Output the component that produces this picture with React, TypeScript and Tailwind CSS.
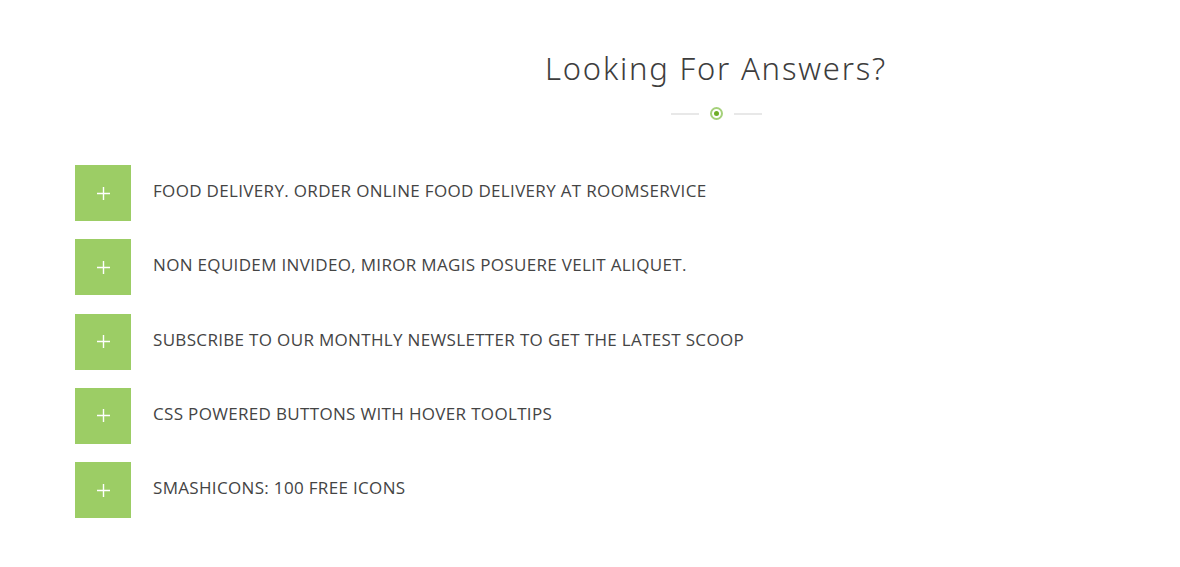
const faqs = [
  "Food delivery. Order online food delivery at RoomService",
  "Non equidem invideo, miror magis posuere velit aliquet.",
  "Subscribe to our monthly newsletter to get the latest scoop",
  "CSS Powered Buttons with Hover Tooltips",
  "Smashicons: 100 Free Icons",
]

export default function App() {
  return (
    <div className="w-[1180px] h-[567px] bg-white overflow-hidden">
      <div className="pl-[252px] pt-[48px] text-center">
        <h2
          className="text-[31px] leading-[40px] font-light text-[#3d3d3d] tracking-[1.8px]"
          style={{ fontFamily: "'Noto Sans', sans-serif" }}
        >
          Looking For Answers?
        </h2>
        <div className="flex items-center justify-center gap-[11px] mt-[19px]">
          <span className="w-[28px] h-[2px] bg-[#e8e8e8]" />
          <span className="w-[13px] h-[13px] rounded-full border-2 border-[#a5d17a] flex items-center justify-center">
            <span className="w-[5px] h-[5px] rounded-full bg-[#6fae2a]" />
          </span>
          <span className="w-[28px] h-[2px] bg-[#e8e8e8]" />
        </div>
      </div>

      <div className="flex flex-col gap-[18.25px] pl-[75px] mt-[45px]">
        {faqs.map((q) => (
          <div key={q} className="flex items-center gap-[22px]">
            <button className="w-[56px] h-[56px] bg-[#9ccd65] flex items-center justify-center">
              <svg width="13" height="13" viewBox="0 0 13 13">
                <path d="M6.5 0v13M0 6.5h13" stroke="#fff" strokeWidth="1.4" />
              </svg>
            </button>
            <span
              className="uppercase text-[17px] leading-[24px] -mt-[4px] text-[#444] tracking-[0.33px]"
              style={{ fontFamily: "'Open Sans', sans-serif" }}
            >
              {q}
            </span>
          </div>
        ))}
      </div>
    </div>
  )
}
